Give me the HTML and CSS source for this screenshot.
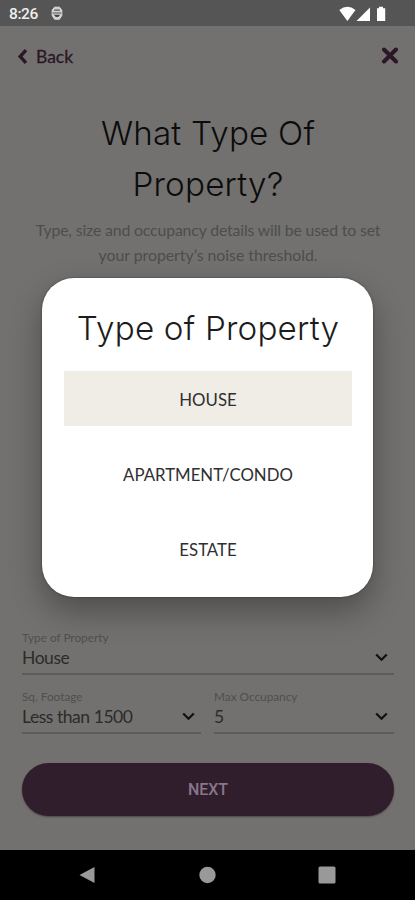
FILE: index.html
```html
<!DOCTYPE html>
<html lang="en">
<head>
<meta charset="utf-8">
<title>Type of Property</title>
<link rel="stylesheet" href="styles.css">
</head>
<body>
<div class="phone">
  <header class="status">
    <span class="time">8:26</span>
    <svg class="face" width="12" height="15" viewBox="0 0 12 15"><path d="M3.500 1.200h5l2.300 3v5.300L8.400 13.200H3.600L1.200 9.500V4.200z" fill="#d0d0d0" stroke="#dedede" stroke-width="1"/><path d="M3.200 4.200h5.600M1.500 7h9" stroke="#555" stroke-width="1.200"/><path d="M2.800 8.800h6.400L7.200 11H4.800z" fill="#444"/></svg>
    <svg class="signals" width="48" height="16" viewBox="0 0 48 16" fill="#fff"><path d="M0.300 4Q8.400-2.400 16.500 4L8.400 15z"/><path d="M17.500 15L31 1.500V15z"/><path d="M38 2.200h2V0.800h4v1.400h2.200V15H38z"/></svg>
  </header>
  <main class="screen">
    <nav class="top">
      <a class="back"><svg width="10" height="15" viewBox="0 0 10 15"><path d="M9 1.200L3.200 7.500L9 13.800" fill="none" stroke="#2b1728" stroke-width="3.400"/></svg>Back</a>
      <svg width="18" height="18" viewBox="0 0 18 18"><path d="M3 2.500L15 14.500M15 2.500L3 14.500" stroke="#2b1728" stroke-width="4" stroke-linecap="round"/></svg>
    </nav>
    <h1>What Type Of<br>Property?</h1>
    <p class="intro"><span>Type, size and occupancy details will be used to set</span><br>your property’s noise threshold.</p>
    <form class="fields">
      <div class="field wide"><label>Type of Property</label><div class="value">House<svg width="13" height="9" viewBox="0 0 13 9"><path d="M1.200 1.500L6.500 6.800L11.800 1.500"/></svg></div></div>
      <div class="field"><label>Sq. Footage</label><div class="value">Less than 1500<svg width="13" height="9" viewBox="0 0 13 9"><path d="M1.200 1.500L6.500 6.800L11.800 1.500"/></svg></div></div>
      <div class="field"><label>Max Occupancy</label><div class="value">5<svg width="13" height="9" viewBox="0 0 13 9"><path d="M1.200 1.500L6.500 6.800L11.800 1.500"/></svg></div></div>
    </form>
    <div class="next">NEXT</div>
  </main>
  <footer class="keys">
    <svg width="18" height="18" viewBox="0 0 18 18"><path d="M1.500 9L16.500 1V17z"/></svg>
    <svg width="18" height="18" viewBox="0 0 18 18"><circle cx="9.500" cy="9" r="8.200"/></svg>
    <svg width="18" height="18" viewBox="0 0 18 18"><rect x="0.500" y="0.500" width="17" height="17" rx="1.500"/></svg>
  </footer>
  <section class="dialog">
    <h2>Type of Property</h2>
    <ul>
      <li class="selected">HOUSE</li>
      <li>APARTMENT/CONDO</li>
      <li>ESTATE</li>
    </ul>
  </section>
</div>
</body>
</html>
```
FILE: styles.css
```css
* { box-sizing: border-box; }
body { margin: 0; font-family: Lato, sans-serif; }
.phone { position: relative; width: 415px; height: 900px; display: flex; flex-direction: column; overflow: hidden; background: #73716f; }
.status { height: 26px; flex: none; background: #555; display: flex; align-items: center; padding: 1px 28px 0 9px; }
.time { font: 500 15.500px Roboto, sans-serif; letter-spacing: -0.400px; color: #eee; }
.face { margin-left: 13px; }
.signals { margin-left: auto; }
.screen { flex: 1; display: flex; flex-direction: column; padding: 0 21px 0 22px; }
.top { height: 60px; margin: 0 -5px; display: flex; align-items: center; justify-content: space-between; }
.back { display: flex; align-items: center; gap: 9px; font-size: 17.500px; -webkit-text-stroke: 0.300px #2b1728; color: #2b1728; }
h1, h2 { margin: 0; font-family: Inter, sans-serif; font-weight: 300; text-align: center; letter-spacing: 0.200px; }
h1 { margin-top: 22px; font-size: 33.200px; line-height: 51px; color: #0c0c0c; }
.intro { margin: 7px -10px 0; font-size: 15.800px; line-height: 25px; text-align: center; color: #4c4d4c; }
.intro span { letter-spacing: -0.140px; }
.fields { margin-top: auto; display: grid; grid-template-columns: 179px 180px; column-gap: 13px; row-gap: 14px; }
.field { height: 45px; border-bottom: 2px solid #5b5c5b; display: flex; flex-direction: column; }
.wide { grid-column: 1 / 3; }
label { font-size: 11.800px; line-height: 15px; color: #4e4f4e; }
.value { display: flex; align-items: center; justify-content: space-between; height: 25px; padding-right: 6px; font-size: 17.500px; letter-spacing: -0.450px; color: #2b2b2a; }
.value svg { fill: none; stroke: #111; stroke-width: 2.200; }
.next { height: 53px; margin: 29px 0 34px; flex: none; border-radius: 27px; background: #311e2d; box-shadow: 0 1px 2px #4d4549; display: flex; align-items: center; justify-content: center; color: #88768a; font: 500 16px Roboto, sans-serif; }
.keys { height: 50px; flex: none; background: #000; display: flex; align-items: center; justify-content: space-between; padding: 0 79px 0 78px; fill: #999; }
.dialog { position: absolute; left: 42px; top: 278px; width: 331px; height: 319px; border-radius: 32px; background: #fff; box-shadow: 0 0 2px rgba(0,0,0,.5), 0 14px 32px rgba(0,0,0,.32); padding: 25px 21px 0 22px; }
h2 { font-size: 33.200px; line-height: 50px; color: #1c1c1c; white-space: nowrap; }
ul { list-style: none; margin: 18px 0 0; padding: 0; display: grid; gap: 20px; }
li { height: 55px; padding-top: 2px; display: flex; align-items: center; justify-content: center; font-size: 16.800px; color: #2f2f2f; }
.selected { background: #f0ede7; }
```
